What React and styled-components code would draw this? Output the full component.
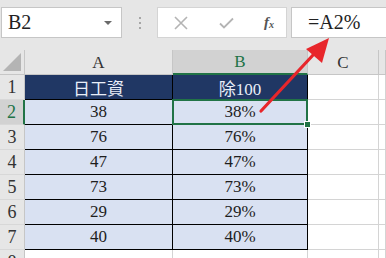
import React from "react";
import styled, { createGlobalStyle } from "styled-components";

const GlobalStyle = createGlobalStyle`
  html, body {
    margin: 0;
    padding: 0;
    background: #fff;
    overflow: hidden;
  }
  body {
    font-family: "Liberation Serif", "Noto Sans CJK TC", serif;
  }
`;

const rows = [
  [38, "38%"],
  [76, "76%"],
  [47, "47%"],
  [73, "73%"],
  [29, "29%"],
  [40, "40%"],
];

function App() {
  return (
    <Page>
      <GlobalStyle />
      <Toolbar>
        <NameBox>
          <span>B2</span>
          <Caret />
        </NameBox>
        <Dots>
          <i />
          <i />
          <i />
        </Dots>
        <ActionBox>
          <Action muted>
            <svg width="14" height="14" viewBox="0 0 14 14">
              <path d="M1 1L13 13M13 1L1 13" stroke="#b4b4b4" strokeWidth="1.6" fill="none" />
            </svg>
          </Action>
          <Action muted>
            <svg width="15" height="12" viewBox="0 0 15 12">
              <path d="M1 6.5L5 10.5L14 1.5" stroke="#b4b4b4" strokeWidth="1.8" fill="none" />
            </svg>
          </Action>
          <Fx>
            f<sub>x</sub>
          </Fx>
        </ActionBox>
        <FormulaInput>=A2%</FormulaInput>
      </Toolbar>

      <Sheet>
        <Corner>
          <svg width="18" height="18" viewBox="0 0 18 18">
            <polygon points="18,0 18,18 0,18" fill="#b4b4b4" />
          </svg>
        </Corner>
        <ColHead>A</ColHead>
        <ColHead selected>B</ColHead>
        <ColHead>C</ColHead>
        <ColHead />

        <RowHead>1</RowHead>
        <TitleCell>日工資</TitleCell>
        <TitleCell>除100</TitleCell>
        <Blank />
        <Blank />

        {rows.map(([a, b], i) => (
          <React.Fragment key={i}>
            <RowHead selected={i === 0}>{i + 2}</RowHead>
            <DataCell>{a}</DataCell>
            <DataCell active={i === 0}>{b}</DataCell>
            <Blank />
            <Blank />
          </React.Fragment>
        ))}

        <RowHead>8</RowHead>
        <Blank />
        <Blank />
        <Blank />
        <Blank />
      </Sheet>

      <Arrow width="386" height="258" viewBox="0 0 386 258">
        <line x1="261" y1="111" x2="314" y2="54" stroke="#e8262b" strokeWidth="3.2" strokeLinecap="round" />
        <polygon points="329,38 306,49 322,63" fill="#e8262b" />
      </Arrow>
    </Page>
  );
}

export default App;

const Page = styled.div`
  position: relative;
  width: 386px;
  height: 258px;
  overflow: hidden;
  background: #fff;
`;

const Toolbar = styled.div`
  height: 50px;
  box-sizing: border-box;
  background: #e6e6e6;
  display: flex;
  align-items: flex-start;
  padding: 7px 0 0 1px;
`;

const NameBox = styled.div`
  width: 121px;
  height: 31px;
  box-sizing: border-box;
  background: #fff;
  border: 1px solid #c6c6c6;
  display: flex;
  align-items: center;
  justify-content: space-between;
  padding: 0 9px 0 6px;
  font-size: 20px;
  color: #222;
`;

const Caret = styled.span`
  width: 0;
  height: 0;
  border-left: 4px solid transparent;
  border-right: 4px solid transparent;
  border-top: 4px solid #6a6a6a;
`;

const Dots = styled.div`
  width: 35px;
  height: 31px;
  display: flex;
  flex-direction: column;
  align-items: center;
  justify-content: center;
  gap: 3px;

  i {
    display: block;
    width: 2px;
    height: 2px;
    background: #a6a6a6;
  }
`;

const ActionBox = styled.div`
  width: 130px;
  height: 31px;
  box-sizing: border-box;
  background: #fff;
  border: 1px solid #d4d4d4;
  display: flex;
  align-items: center;
  padding: 0 12px 0 16px;
  justify-content: space-between;
`;

const Action = styled.span`
  display: flex;
  align-items: center;
  opacity: ${(p) => (p.muted ? 1 : 0.6)};
`;

const Fx = styled.span`
  font-style: italic;
  font-weight: bold;
  font-size: 15px;
  color: #555;
  sub {
    font-size: 10px;
    vertical-align: -1px;
  }
`;

const FormulaInput = styled.div`
  margin-left: 4px;
  flex: 1;
  height: 31px;
  box-sizing: border-box;
  background: #fff;
  border: 1px solid #c6c6c6;
  border-right: none;
  display: flex;
  align-items: center;
  padding-left: 16px;
  font-size: 20px;
  color: #222;
`;

const Sheet = styled.div`
  display: grid;
  grid-template-columns: 25px 148px 135px 71px 1fr;
  grid-template-rows: 25px 25px repeat(6, 25px) 25px;
  font-size: 17px;
  color: #1e1e1e;
`;

const Cell = styled.div`
  box-sizing: border-box;
  display: flex;
  align-items: center;
  justify-content: center;
  border-right: 1px solid #d4d4d4;
  border-bottom: 1px solid #d4d4d4;
  position: relative;
`;

const Corner = styled(Cell)`
  background: #e6e6e6;
  border-right: 1px solid #c6c6c6;
  border-bottom: 1px solid #c6c6c6;
  align-items: flex-end;
  justify-content: flex-end;
  padding: 0 3px 3px 0;
`;

const ColHead = styled(Cell)`
  background: ${(p) => (p.selected ? "#d2d2d2" : "#e6e6e6")};
  color: ${(p) => (p.selected ? "#217346" : "#333")};
  border-right: 1px solid #c6c6c6;
  border-bottom: ${(p) => (p.selected ? "2px solid #217346" : "1px solid #c6c6c6")};
  padding-top: 1px;
`;

const RowHead = styled(Cell)`
  background: ${(p) => (p.selected ? "#d2d2d2" : "#e6e6e6")};
  color: ${(p) => (p.selected ? "#217346" : "#333")};
  border-right: ${(p) => (p.selected ? "2px solid #217346" : "1px solid #c6c6c6")};
  border-bottom: 1px solid #d8d8d8;
  font-size: 18px;
`;

const TitleCell = styled(Cell)`
  background: #203764;
  color: #e9eef8;
  border-right-color: #000;
  border-bottom-color: #000;
`;

const DataCell = styled(Cell)`
  background: #d9e1f2;
  border-right-color: #000;
  border-bottom-color: #000;

  ${(p) =>
    p.active &&
    `
    &::after {
      content: "";
      position: absolute;
      top: -1px;
      left: -1px;
      right: -1px;
      bottom: -1px;
      border: 2px solid #217346;
    }
    &::before {
      content: "";
      position: absolute;
      right: -4px;
      bottom: -4px;
      width: 5px;
      height: 5px;
      background: #217346;
      border: 1px solid #fff;
      z-index: 1;
    }
  `}
`;

const Blank = styled(Cell)`
  background: #fff;
`;

const Arrow = styled.svg`
  position: absolute;
  top: 0;
  left: 0;
  pointer-events: none;
`;
